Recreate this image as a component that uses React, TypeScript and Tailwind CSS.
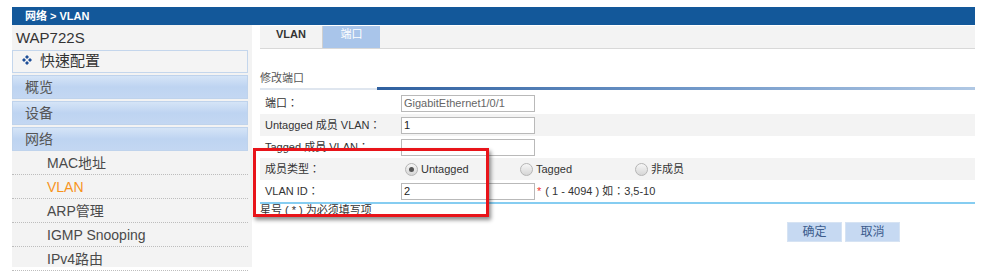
const font = "font-['Liberation_Sans','Noto_Sans_CJK_TC',sans-serif]";

const menus = ["概览", "设备", "网络"];
const subs = ["MAC地址", "VLAN", "ARP管理", "IGMP Snooping", "IPv4路由"];

function Radio({ checked, label }: { checked?: boolean; label: string }) {
  return (
    <label className="flex w-[115px] items-center gap-[3px] pl-[4px]">
      <span className="grid h-[13px] w-[13px] place-items-center rounded-full border border-[#b5b5b5] bg-gradient-to-b from-[#f6f6f6] to-[#d6d6d6]">
        {checked && <span className="h-[5px] w-[5px] rounded-full bg-[#555]" />}
      </span>
      <span className="text-[11px] text-[#333]">{label}</span>
    </label>
  );
}

function Field({ value, muted }: { value?: string; muted?: boolean }) {
  return (
    <div className={`h-[17px] w-[134px] border border-[#b9b9b9] bg-white pl-[2px] text-[11px] leading-[15px] ${muted ? "text-[#666]" : "text-[#222]"}`}>
      {value}
    </div>
  );
}

function Diamond() {
  return (
    <svg width="10" height="10" viewBox="0 0 10 10" className="mt-[-4px]">
      <g fill="#1e4f98">
        <path d="M5 0 L7 2 L5 4 L3 2 Z" />
        <path d="M2 3 L4 5 L2 7 L0 5 Z" />
        <path d="M8 3 L10 5 L8 7 L6 5 Z" />
        <path d="M5 6 L7 8 L5 10 L3 8 Z" />
      </g>
    </svg>
  );
}

export default function App() {
  const rows: [string, React.ReactNode][] = [
    ["端口：", <Field value="GigabitEthernet1/0/1" muted />],
    ["Untagged 成员 VLAN：", <Field value="1" />],
    ["Tagged 成员 VLAN：", <Field />],
    [
      "成员类型：",
      <div className="flex">
        <Radio checked label="Untagged" />
        <Radio label="Tagged" />
        <Radio label="非成员" />
      </div>,
    ],
    [
      "VLAN ID：",
      <div className="flex items-center">
        <Field value="2" />
        <span className="ml-[2px] text-[11px] text-[#e33]">*</span>
        <span className="ml-[4px] text-[11px] text-[#333]">( 1 - 4094 ) 如：3,5-10</span>
      </div>,
    ],
  ];

  return (
    <div className={`relative h-[278px] w-[1008px] overflow-hidden bg-white ${font}`}>
      <div className="ml-[12px] mt-[7px] w-[963px]">
        <div className="h-[18px] bg-[#13589a] pl-[13px] text-[11px] font-bold leading-[18px] text-white">网络 &gt; VLAN</div>

        <div className="flex">
          <aside className="h-[242px] w-[240px] bg-[#f3f3f3]">
            <div className="h-[25px] pl-[4px] text-[15px] leading-[25px] text-[#333]">WAP722S</div>
            <div className="flex h-[23px] w-[236px] items-center gap-[8px] border border-[#c4d6ec] bg-[#f4f4f4] pl-[9px] text-[15px] text-[#333]">
              <Diamond />
              快速配置
            </div>
            <div className="mt-[2px] flex w-[236px] flex-col gap-[2px]">
              {menus.map((m) => (
                <div key={m} className="h-[24px] border border-[#bfd3ec] bg-gradient-to-b from-[#d5e4f7] via-[#bed4f1] to-[#c3d7f2] pl-[12px] text-[14px] leading-[22px] text-[#555]">
                  {m}
                </div>
              ))}
            </div>
            <div className="w-[236px]">
              {subs.map((s) => (
                <div key={s} className={`h-[24px] border-b border-dotted border-[#bdbdbd] pl-[35px] text-[14px] leading-[24px] ${s === "VLAN" ? "text-[#f7941d]" : "text-[#4a4a4a]"}`}>
                  {s}
                </div>
              ))}
            </div>
          </aside>

          <main className="ml-[8px] w-[715px]">
            <div className="mt-[1px] flex h-[23px] border-b border-[#d8d8d8] bg-[#f3f3f3] text-[11px]">
              <div className="w-[63px] border-r border-[#d0d0d0] text-center font-bold leading-[16px] text-[#333]">VLAN</div>
              <div className="w-[57px] bg-[#a9c5ea] text-center leading-[16px] text-white">端口</div>
            </div>

            <div className="mt-[22px] h-[14px] text-[11px] leading-[14px] text-[#555]">修改端口</div>
            <div className="mt-[2px] flex h-[3px] items-end">
              <div className="h-[2px] w-[117px] bg-[#dfe6ef]" />
              <div className="h-[3px] flex-1 bg-gradient-to-r from-[#2f609f] via-[#6d95c7] to-[#b0c8e4]" />
            </div>

            <div className="mt-[2px]">
              {rows.map(([label, control], i) => (
                <div key={i} className={`flex h-[22px] items-center ${i % 2 === 1 ? "bg-[#f3f3f3]" : "bg-white"}`}>
                  <div className="w-[141px] pl-[5px] text-[11px] text-[#333]">{label}</div>
                  {control}
                </div>
              ))}
            </div>
            <div className="h-[2px] bg-[#86cdf1]" />
            <div className="h-[13px] text-[11px] leading-[13px] text-[#333]">星号 ( * ) 为必须填写项</div>

            <div className="mt-[5px] flex justify-end gap-[3px] pr-[75px]">
              <button className="h-[20px] w-[55px] border border-[#d6e3f3] bg-[#c6d9f2] text-[12px] text-[#3d5d8e]">确定</button>
              <button className="h-[20px] w-[55px] border border-[#d6e3f3] bg-[#c6d9f2] text-[12px] text-[#3d5d8e]">取消</button>
            </div>
          </main>
        </div>
      </div>

      <div className="absolute left-[253px] top-[148px] h-[69px] w-[236px] border-[3px] border-[#e8141a] shadow-[2px_3px_4px_rgba(0,0,0,0.45)]" />
    </div>
  );
}
